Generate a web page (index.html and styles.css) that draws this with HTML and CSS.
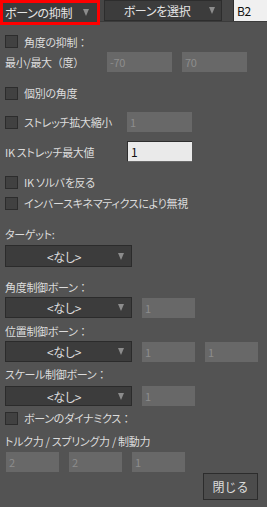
FILE: index.html
```html
<!DOCTYPE html>
<html lang="ja">
<head>
  <meta charset="UTF-8">
  <title>ボーンの抑制</title>
  <link rel="stylesheet" href="styles.css">
</head>
<body>
  <!-- Top bar: mode / bone picker / bone name -->
  <div class="topbar">
    <div class="top-select highlighted">
      <span class="top-text">ボーンの抑制</span>
      <span class="arrow"></span>
    </div>
    <div class="top-select picker">
      <span class="top-text centered">ボーンを選択</span>
      <span class="arrow"></span>
    </div>
    <div class="name-field">B2</div>
  </div>

  <div class="panel">
    <div class="row r-angle">
      <span class="check"></span><span>角度の抑制<span class="fw">：</span></span>
    </div>
    <div class="row r-minmax">
      <span class="label w-minmax fw">最小/最大（度）</span>
      <span class="field wide">-70</span>
      <span class="field wide">70</span>
    </div>
    <div class="row r-indiv">
      <span class="check"></span><span>個別の角度</span>
    </div>
    <div class="row r-stretch">
      <span class="check"></span><span class="label w-stretch">ストレッチ拡大縮小</span>
      <span class="field wide">1</span>
    </div>
    <div class="row r-ikmax">
      <span class="label w-ik">IK ストレッチ最大値</span>
      <span class="field wide active">1</span>
    </div>
    <div class="row r-solver">
      <span class="check"></span><span>IK ソルバを反る</span>
    </div>
    <div class="row r-inverse">
      <span class="check"></span><span>インバースキネマティクスにより無視</span>
    </div>

    <div class="caption c-target">ターゲット:</div>
    <div class="row r-drop1">
      <div class="select"><span class="sel-text">&lt;なし&gt;</span><span class="arrow"></span></div>
    </div>

    <div class="caption c-rot">角度制御ボーン<span class="fw">：</span></div>
    <div class="row r-drop2">
      <div class="select"><span class="sel-text">&lt;なし&gt;</span><span class="arrow"></span></div>
      <span class="field">1</span>
    </div>

    <div class="caption c-pos">位置制御ボーン<span class="fw">：</span></div>
    <div class="row r-drop3">
      <div class="select"><span class="sel-text">&lt;なし&gt;</span><span class="arrow"></span></div>
      <span class="field">1</span>
      <span class="field">1</span>
    </div>

    <div class="caption c-scale">スケール制御ボーン<span class="fw">：</span></div>
    <div class="row r-drop4">
      <div class="select"><span class="sel-text">&lt;なし&gt;</span><span class="arrow"></span></div>
      <span class="field">1</span>
    </div>

    <div class="row r-dyn">
      <span class="check"></span><span>ボーンのダイナミクス<span class="fw">：</span></span>
    </div>
    <div class="caption c-force">トルク力 / スプリング力 / 制動力</div>
    <div class="row r-forces">
      <span class="field">2</span>
      <span class="field">2</span>
      <span class="field">1</span>
    </div>

    <div class="footer">
      <button class="close-btn">閉じる</button>
    </div>
  </div>
</body>
</html>
```

FILE: styles.css
```css
/* Base */
* {
  margin: 0;
  padding: 0;
  box-sizing: border-box;
}
html, body {
  height: 100%;
  background: #535353;
  color: #dcdcdc;
  font-family: "Noto Sans CJK JP", "Noto Sans", sans-serif;
  font-size: 11px;
  /* proportional kana, closer to the narrow UI font of the dialog */
  font-feature-settings: "palt";
  letter-spacing: -0.3px;
  overflow: hidden;
}
/* full-width punctuation keeps its square cell */
.fw {
  font-feature-settings: normal;
}

/* Top bar */
.topbar {
  display: flex;
  align-items: flex-start;
  height: 22px;
  background: #464646;
  border-bottom: 1px solid #3b3b3b;
}
.top-select {
  display: flex;
  align-items: center;
  height: 21px;
  background: #3c3c3c;
  border: 1px solid #2d2d2d;
  color: #e4e4e4;
  font-size: 12px;
}
.top-select.highlighted {
  width: 100px;
  height: 25px;
  border: 3px solid #f00;
  padding: 0 8px 0 2px;
  position: relative;
  z-index: 1;
}
.top-select.picker {
  width: 118px;
  margin-left: 4px;
  padding: 0 6px 0 0;
}
.top-text {
  flex: 1;
}
.top-text.centered {
  text-align: center;
}
.name-field {
  width: 34px;
  height: 21px;
  margin-left: 11px;
  background: #f0f0f0;
  color: #111;
  font-size: 12px;
  line-height: 21px;
  padding-left: 3px;
  border-left: 1px solid #2d2d2d;
}
.arrow {
  width: 0;
  height: 0;
  border-left: 3.5px solid transparent;
  border-right: 3.5px solid transparent;
  border-top: 7px solid #8c8c8c;
}

/* Main panel */
.panel {
  padding: 9px 9px 0 5px;
  display: flex;
  flex-direction: column;
}
.row {
  display: flex;
  align-items: center;
  height: 20px;
}
.caption {
  height: 16px;
  line-height: 16px;
}
.label {
  flex-shrink: 0;
}
.w-minmax { width: 102px; }
.w-stretch { width: 103px; }
.w-ik { width: 122px; }

.check {
  width: 13px;
  height: 13px;
  background: #414141;
  border: 1px solid #2c2c2c;
  margin-right: 6px;
  flex-shrink: 0;
}
.field {
  width: 53px;
  height: 20px;
  background: #686868;
  color: #8d8d8d;
  line-height: 20px;
  padding-left: 3px;
  font-size: 11px;
  flex-shrink: 0;
}
.field.wide {
  width: 65px;
}
.field + .field,
.select + .field {
  margin-left: 10px;
}
.field.active {
  background: #eaeaea;
  color: #111;
  height: 21px;
  border-top: 1px solid #2e2e2e;
  border-left: 1px solid #2e2e2e;
  border-bottom: 1px solid #6a6a6a;
  font-size: 12px;
}

.select {
  width: 127px;
  height: 21px;
  display: flex;
  align-items: center;
  background: #3c3c3c;
  border: 1px solid #2b2b2b;
  padding-right: 7px;
  flex-shrink: 0;
}
.sel-text {
  flex: 1;
  text-align: center;
  padding-left: 4px;
  font-size: 12px;
  color: #dedede;
}

/* Vertical rhythm, matched to the dialog */
.r-angle { height: 21px; }
.r-indiv { margin-top: 11px; }
.r-stretch { margin-top: 9px; }
.r-ikmax { margin-top: 9px; height: 21px; }
.r-solver { margin-top: 10px; }
.r-inverse { margin-top: 1px; }
.c-target { margin-top: 13px; }
.r-drop1 { margin-top: 3px; height: 22px; }
.r-drop1 .select { height: 22px; }
.c-rot { margin-top: 12px; }
.r-drop2 { margin-top: 2px; height: 21px; }
.c-pos { margin-top: 5px; }
.r-drop3 { margin-top: 2px; height: 21px; }
.c-scale { margin-top: 4px; }
.r-drop4 { margin-top: 4px; }
.r-drop4 .select { height: 20px; }
.r-dyn { margin-top: 2px; }
.c-force { margin-top: 5px; }
.r-forces { margin-top: 3px; padding-left: 1px; }

.footer {
  display: flex;
  justify-content: flex-end;
  margin-top: 1px;
}
.close-btn {
  width: 55px;
  height: 27px;
  background: #4c4c4c;
  border: 1px solid #2c2c2c;
  color: #dcdcdc;
  font-family: inherit;
  font-size: 12px;
}
```
